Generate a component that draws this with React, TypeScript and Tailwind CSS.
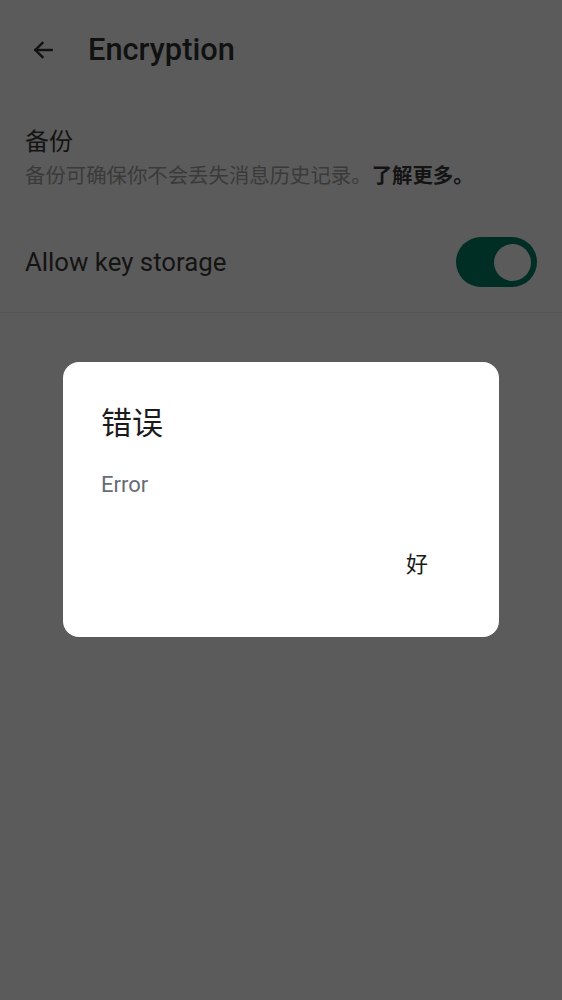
import React from 'react';

const font = { fontFamily: 'Roboto, "Noto Sans CJK SC", sans-serif' };

const BackArrow: React.FC = () => (
  <svg width="26" height="26" viewBox="0 0 24 24" fill="none" stroke="#111111" strokeWidth="2.2" strokeLinecap="square">
    <path d="M20 12H5" />
    <path d="M11.5 5.5 5 12l6.5 6.5" />
  </svg>
);

const App: React.FC = () => {
  return (
    <div className="relative w-[562px] h-[1000px] bg-[#5b5b5b] overflow-hidden" style={font}>
      {/* settings page, already dimmed */}
      <header className="h-[100px] flex items-center pl-[30px]">
        <BackArrow />
        <h1 className="ml-[32px] text-[30.8px] font-medium text-[#111111]">Encryption</h1>
      </header>

      <div className="px-[25px] border-b border-[#555555]">
        <div className="pt-[26px]">
          <div className="text-[24px] leading-[32px] text-[#141414]">备份</div>
          <div className="mt-[4px] text-[20.4px] leading-[28px] text-[#3a3a3a]">
            备份可确保你不会丢失消息历史记录。<span className="font-bold text-[#141414]">了解更多。</span>
          </div>
        </div>
        <div className="mt-[22px] h-[100px] flex items-center justify-between">
          <span className="text-[25.8px] text-[#141414]">Allow key storage</span>
          <div className="w-[81px] h-[50px] rounded-full bg-[#002e25] flex items-center justify-end pr-[6px]">
            <div className="w-[37px] h-[37px] rounded-full bg-[#5b5b5b]" />
          </div>
        </div>
      </div>

      {/* error dialog */}
      <div className="absolute left-[63px] top-[362px] w-[436px] h-[275px] bg-white rounded-[16px] px-[38px] pt-[42px] flex flex-col">
        <div className="text-[31px] leading-[40px] text-[#1b1b1b]">错误</div>
        <div className="mt-[27px] text-[22px] leading-[28px] text-[#656c75]">Error</div>
        <div className="mt-[51px] flex justify-end pr-[33px]">
          <button className="text-[22px] leading-[30px] text-[#1b1b1b]">好</button>
        </div>
      </div>
    </div>
  );
};

export default App;
